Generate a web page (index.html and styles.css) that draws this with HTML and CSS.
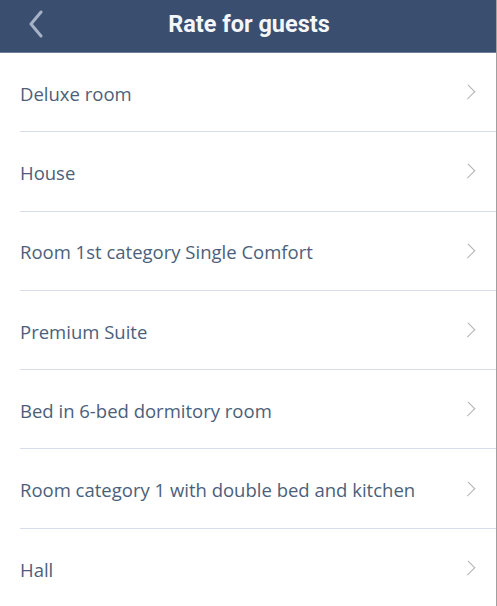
FILE: index.html
```html
<!DOCTYPE html>
<html lang="en">
<head>
    <meta charset="UTF-8">
    <meta name="viewport" content="width=device-width, initial-scale=1.0">
    <title>Rate for guests</title>
    <link rel="stylesheet" href="styles.css">
</head>
<body>
    <div class="screen">
        <header class="top-bar">
            <button class="back-btn" aria-label="Back">
                <svg width="16" height="28" viewBox="0 0 16 28">
                    <path d="M13 2 L3 14 L13 26" fill="none" stroke="#a6b2c6" stroke-width="3" stroke-linecap="round" stroke-linejoin="round"/>
                </svg>
            </button>
            <h1>Rate for guests</h1>
        </header>

        <ul class="room-list">
            <li class="room-item"><span>Deluxe room</span><i class="chevron"></i></li>
            <li class="room-item"><span>House</span><i class="chevron"></i></li>
            <li class="room-item"><span>Room 1st category Single Comfort</span><i class="chevron"></i></li>
            <li class="room-item"><span>Premium Suite</span><i class="chevron"></i></li>
            <li class="room-item"><span>Bed in 6-bed dormitory room</span><i class="chevron"></i></li>
            <li class="room-item"><span>Room category 1 with double bed and kitchen</span><i class="chevron"></i></li>
            <li class="room-item"><span>Hall</span><i class="chevron"></i></li>
        </ul>
    </div>
</body>
</html>
```

FILE: styles.css
```css
* {
    margin: 0;
    padding: 0;
    box-sizing: border-box;
}

body {
    font-family: 'Open Sans', sans-serif;
    background: #ffffff;
    min-height: 100vh;
}

.screen {
    min-height: 100vh;
    border-right: 1px solid #a0a0a0;
}

.top-bar {
    position: relative;
    height: 53px;
    background: #3a4e70;
    border-bottom: 1px solid #6b7d99;
    display: flex;
    align-items: center;
    justify-content: center;
    padding-bottom: 4px;
}

.back-btn {
    position: absolute;
    left: 28px;
    top: 10px;
    background: none;
    border: none;
    display: flex;
}

.top-bar h1 {
    font-family: 'Roboto', sans-serif;
    font-weight: 700;
    font-size: 23.5px;
    color: #f4f6fa;
    margin-left: 2px;
}

.room-list {
    list-style: none;
}

.room-item {
    height: 79.3px;
    margin-left: 20px;
    padding-right: 22px;
    border-bottom: 1px solid #d6dde6;
    display: flex;
    align-items: center;
    justify-content: space-between;
    font-size: 18.5px;
    color: #4c5f7a;
    padding-top: 2px;
}

.room-item:last-child {
    border-bottom: none;
}

.chevron {
    width: 10px;
    height: 10px;
    border-top: 1.5px solid #b4b4b4;
    border-right: 1.5px solid #b4b4b4;
    transform: rotate(45deg) scaleY(1.1);
    margin-top: -2px;
    margin-right: 1px;
}
```
